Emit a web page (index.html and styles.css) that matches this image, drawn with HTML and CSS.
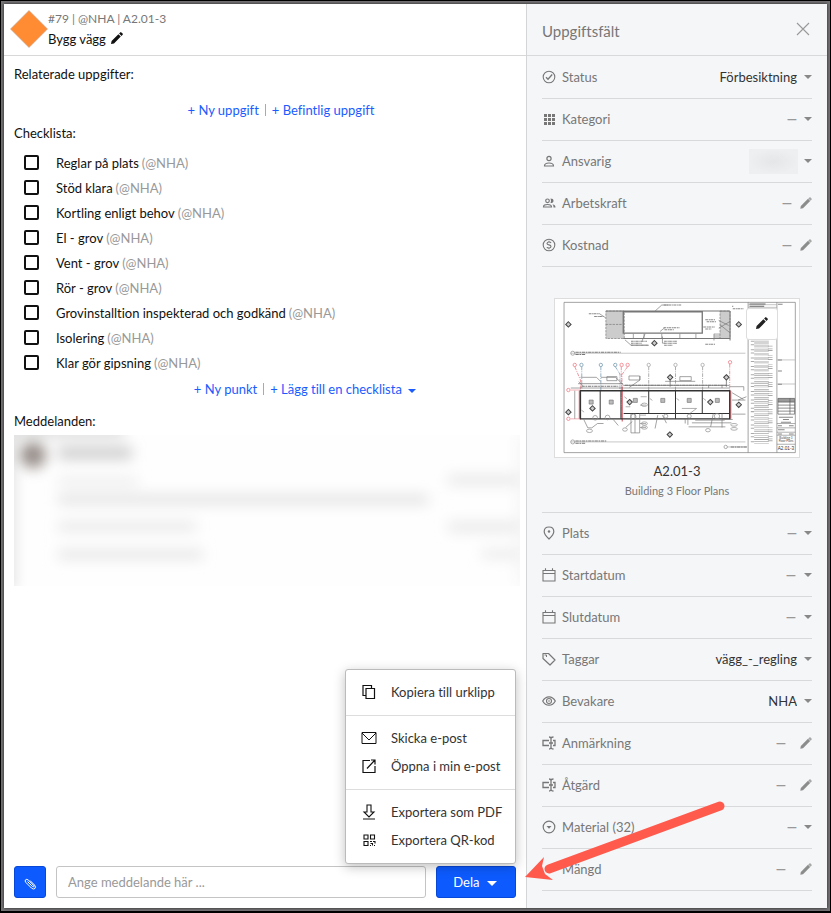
FILE: index.html
```html
<!DOCTYPE html>
<html lang="sv">
<head>
    <meta charset="utf-8">
    <title>Bygg vägg</title>
    <link rel="stylesheet" href="styles.css">
</head>
<body>
    <!-- Shared icons -->
    <svg class="sprite" aria-hidden="true">
        <symbol id="caret" viewBox="0 0 8 4"><path d="M0 0h8L4 4z" fill="currentColor"/></symbol>
        <symbol id="pencil" viewBox="0 0 12 12"><path d="M0 12l.6-3L7.400 2.200l2.400 2.400L3 11.400zM8.100 1.500L9.200.4q.6-.6 1.200 0l1.200 1.200q.6.600 0 1.200l-1.100 1.100z" fill="currentColor"/></symbol>
        <symbol id="edit" viewBox="0 0 12 12"><path d="M.3 11.700l.5-2.700L8 1.800l2.200 2.200L3 11.200z" fill="currentColor"/><path d="M8.300 1.500l1-1q.7-.5 1.300 0l.9.900q.5.600 0 1.300l-1 1z" fill="currentColor" opacity=".75"/></symbol>
        <symbol id="calendar" viewBox="0 0 14 14"><path d="M1 2.500h12v10.500H1zM1 5.500h12M3.500 .3v2M10.500 .3v2" fill="none" stroke="currentColor" stroke-width="1.100"/></symbol>
        <symbol id="textfield" viewBox="0 0 14 14"><path d="M7 4.500H1v5h6M11 4.500h2v5h-2M7 1q2 0 2 1.500v9Q9 13 7 13M11.500 1Q9 1 9 2.500M9 11.500Q9 13 11.500 13M7 7h4" fill="none" stroke="currentColor" stroke-width="1.300"/></symbol>
    </svg>

    <div class="modal">
        <main class="task">
            <header class="task-header">
                <svg class="stamp" viewBox="0 0 38 38"><path d="M19 .5L37.500 19 19 37.500 .5 19z" fill="#ff8b33" stroke="#b9a89a" stroke-width=".6"/></svg>
                <div>
                    <div class="task-meta">#79 | @NHA | A2.01-3</div>
                    <h1>Bygg vägg <button class="plain" aria-label="Redigera titel"><svg width="12" height="12"><use href="#pencil"/></svg></button></h1>
                </div>
            </header>

            <section class="task-body">
                <h2>Relaterade uppgifter:</h2>
                <div class="links related"><a href="#">+ Ny uppgift</a><i></i><a href="#">+ Befintlig uppgift</a></div>

                <h2>Checklista:</h2>
                <ul class="checklist">
                    <li><label><input type="checkbox"> Reglar på plats <span>(@NHA)</span></label></li>
                    <li><label><input type="checkbox"> Stöd klara <span>(@NHA)</span></label></li>
                    <li><label><input type="checkbox"> Kortling enligt behov <span>(@NHA)</span></label></li>
                    <li><label><input type="checkbox"> El - grov <span>(@NHA)</span></label></li>
                    <li><label><input type="checkbox"> Vent - grov <span>(@NHA)</span></label></li>
                    <li><label><input type="checkbox"> Rör - grov <span>(@NHA)</span></label></li>
                    <li><label><input type="checkbox"> Grovinstalltion inspekterad och godkänd <span>(@NHA)</span></label></li>
                    <li><label><input type="checkbox"> Isolering <span>(@NHA)</span></label></li>
                    <li><label><input type="checkbox"> Klar gör gipsning <span>(@NHA)</span></label></li>
                </ul>
                <div class="links list-links"><a href="#">+ Ny punkt</a><i></i><a href="#">+ Lägg till en checklista <svg width="8" height="4"><use href="#caret"/></svg></a></div>

                <h2 class="messages-title">Meddelanden:</h2>
                <!-- Messages are blurred for privacy -->
                <svg class="messages" viewBox="0 0 506 151" preserveAspectRatio="none" aria-hidden="true">
                    <defs><filter id="soft" x="-20%" y="-60%" width="140%" height="220%"><feGaussianBlur stdDeviation="7"/></filter></defs>
                    <rect width="506" height="151" fill="#fefefe"/>
                    <g filter="url(#soft)">
                        <path d="M-10-10h120v12H-10zM-10 0H0v155h-10z" fill="#d9d9d9"/>
                        <circle cx="19" cy="20" r="13" fill="#948b86"/>
                        <rect x="44" y="12" width="74" height="12" fill="#cbcbcb"/>
                        <rect x="44" y="42" width="80" height="9" fill="#ededed"/>
                        <rect x="44" y="60" width="370" height="9" fill="#e0e0e0"/>
                        <rect x="44" y="87" width="138" height="9" fill="#e6e6e6"/>
                        <rect x="44" y="115" width="145" height="9" fill="#e4e4e4"/>
                        <rect x="434" y="40" width="70" height="10" fill="#e8e8e8"/>
                        <rect x="434" y="87" width="70" height="10" fill="#e8e8e8"/>
                        <rect x="468" y="114" width="36" height="10" fill="#ececec"/>
                        <rect x="504" y="0" width="8" height="151" fill="#f2f2f2"/>
                    </g>
                </svg>
            </section>

            <footer class="composer">
                <button class="primary attach" aria-label="Bifoga fil">
                    <svg width="14" height="14" viewBox="0 0 14 14"><path d="M4.500 4.500l5 5q.8.700 1.300.2t-.2-1.300L5.200 3Q3.700 1.700 2.600 2.800t.2 2.600l5.600 5.600q2 1.900 3.500.5t-.4-3.500L7 3.500" fill="none" stroke="#fff"/></svg>
                </button>
                <input type="text" aria-label="Meddelande" placeholder="Ange meddelande här ...">
                <div class="share">
                    <button class="primary">Dela <svg width="10" height="5"><use href="#caret"/></svg></button>
                    <div class="menu">
                        <div class="menu-group">
                            <button><svg viewBox="0 0 16 16"><path d="M5 4.500h8.500v10H5zM10.500 4V1.500H2v10h2.500" fill="none" stroke="currentColor" stroke-width="1.200"/></svg>Kopiera till urklipp</button>
                        </div>
                        <div class="menu-group">
                            <button><svg viewBox="0 0 16 16"><path d="M1 2.500h14v11H1zM1 3l7 7 7-7" fill="none" stroke="currentColor"/></svg>Skicka e-post</button>
                            <button><svg viewBox="0 0 16 16"><path d="M9 2.500H2v12h12V8M6 10.500l7.500-8M10 2h4v4.500" fill="none" stroke="currentColor" stroke-width="1.200"/></svg>Öppna i min e-post</button>
                        </div>
                        <div class="menu-group">
                            <button><svg viewBox="0 0 16 16"><path d="M6 1h4v7h3l-5 5-5-5h3zM2 15h12" fill="none" stroke="currentColor" stroke-width="1.100"/></svg>Exportera som PDF</button>
                            <button><svg viewBox="0 0 16 16"><path d="M3 3h4v4H3zM9.500 3h4v4h-4zM3 9.500h4v4H3zM9 9.500h2M9.500 11.500h2v2M12 9.500h2v2M9 13.500h1M13 13.500h1" fill="none" stroke="currentColor" stroke-width="1.100"/></svg>Exportera QR-kod</button>
                        </div>
                    </div>
                </div>
            </footer>
        </main>

        <aside class="fields">
            <header class="fields-header">
                <h2>Uppgiftsfält</h2>
                <button class="plain close" aria-label="Stäng"><svg width="14" height="14" viewBox="0 0 14 14"><path d="M1 1l12 12M13 1L1 13" fill="none" stroke="#999" stroke-width="1.100"/></svg></button>
            </header>

            <div class="field-list">
                <div class="field">
                    <svg class="icon" viewBox="0 0 14 14"><circle cx="7" cy="7" r="5.800" fill="none" stroke="currentColor" stroke-width="1.100"/><path d="M4 7.300l2 2 4.200-4.800" fill="none" stroke="currentColor" stroke-width="1.300"/></svg>
                    <label for="status">Status</label>
                    <select id="status"><option>Förbesiktning</option></select>
                    <svg class="caret"><use href="#caret"/></svg>
                </div>
                <div class="field">
                    <svg class="icon" viewBox="0 0 14 14"><path d="M2 2h3v3H2zM6 2h3v3H6zM10 2h3v3h-3zM2 6h3v3H2zM6 6h3v3H6zM10 6h3v3h-3zM2 10h3v3H2zM6 10h3v3H6zM10 10h3v3h-3z" fill="currentColor"/></svg>
                    <label for="category">Kategori</label>
                    <select id="category" class="empty"><option>—</option></select>
                    <svg class="caret"><use href="#caret"/></svg>
                </div>
                <div class="field">
                    <svg class="icon" viewBox="0 0 14 14"><circle cx="7" cy="4.500" r="2.100" fill="none" stroke="currentColor" stroke-width="1.200"/><path d="M2.500 12q0-3 4.500-3t4.500 3z" fill="none" stroke="currentColor" stroke-width="1.200"/></svg>
                    <span class="name">Ansvarig</span>
                    <button class="plain value" aria-label="Välj ansvarig"><span class="redacted"></span><svg class="caret"><use href="#caret"/></svg></button>
                </div>
                <div class="field">
                    <svg class="icon" viewBox="0 0 14 14"><circle cx="5.500" cy="4.800" r="1.800" fill="none" stroke="currentColor" stroke-width="1.200"/><path d="M1.500 11q0-2.500 4-2.500t4 2.500z" fill="none" stroke="currentColor" stroke-width="1.200"/><path d="M8.500 2.500q3 0 3 2.300t-3 2.300q1-2.300 0-4.600zM10.500 8.300q3 .5 3 3.300h-2q.2-2-1-3.300z" fill="currentColor"/></svg>
                    <span class="name">Arbetskraft</span>
                    <button class="plain value" aria-label="Redigera arbetskraft">—<svg class="edit"><use href="#edit"/></svg></button>
                </div>
                <div class="field">
                    <svg class="icon" viewBox="0 0 14 14"><circle cx="7" cy="7" r="5.800" fill="none" stroke="currentColor" stroke-width="1.100"/><path d="M9 5Q8.700 4 7 4T5 5.400Q5 6.500 7 6.900t2 1.600Q9 10 7 10T5 9M7 2.700V4M7 10v1.300" fill="none" stroke="currentColor" stroke-width="1.100"/></svg>
                    <span class="name">Kostnad</span>
                    <button class="plain value" aria-label="Redigera kostnad">—<svg class="edit"><use href="#edit"/></svg></button>
                </div>

                <figure class="plan">
                    <div class="sheet">
                        <svg viewBox="31 28 729 471" aria-label="Planritning A2.01-3">
                            <g fill="none" stroke="#999" stroke-width="2">
                                <path d="M58 38h691v449H58zM608 38v449M694 38v449" stroke="#777"/>
                                <path d="M608 45h86M608 53h86M694 210h55M694 282h55M78 190h522M78 455h522M545 470h60" stroke="#aaa"/>
                                <path d="M694 400h55M694 413h55M694 426h55M694 435h55M694 462h55" stroke="#888"/>
                            </g>
                            <!-- Upper plan -->
                            <path d="M183 64h55v82h-55zM524 64h30v82h-30zM506 130h18v16h-18z" fill="#ccc"/>
                            <g fill="none" stroke="#777" stroke-width="2">
                                <path d="M183 64h55v82h-55zM524 64h30v82h-30zM183 104h50" stroke-dasharray="7 3"/>
                                <path d="M235 66h236v64H235z" stroke="#777" stroke-width="4"/>
                                <path d="M183 64h371M235 146h319M554 64v88" stroke="#777" stroke-width="3"/>
                                <path d="M265 132v14M297 132v14M350 132v14M404 132v14M452 132v14M240 150l18 16h50M300 132l-10 24M345 125l15-12M352 140v20l8 0M330 64l20-18h20M164 72l18 12M506 132v20M520 92l30 15M520 115l34-20M524 105l30 24"/>
                            </g>
                            <path d="M356 46h52M132 72h32M148 80h28M355 114h48M358 120h28M258 154h48M258 160h32M258 166h54M357 154h40M357 160h38M357 166h26M480 90h30M484 96h28M474 112h34M480 118h18M480 163h30M562 48v4M562 57h32" fill="none" stroke="#888" stroke-width="3" stroke-dasharray="8 2 4 1"/>
                            <!-- Grid lines and markers -->
                            <g fill="none" stroke="#888" stroke-width="2" stroke-dasharray="11 3 3 3">
                                <path d="M311 230v72M391 230v158M472 230v72"/>
                                <path d="M111 230v65M168 230v72M211 230l14 22v45" stroke="#628ba5"/>
                                <path d="M90 230l17 40v118M229 230v160M248 230l-17 24v135M553 222v165" stroke="#df6672"/>
                            </g>
                            <g fill="#fff" stroke-width="2">
                                <g stroke="#999"><circle cx="311" cy="225" r="5"/><circle cx="391" cy="225" r="5"/><circle cx="472" cy="225" r="5"/></g>
                                <g stroke="#628ba5"><circle cx="110" cy="225" r="5"/><circle cx="168" cy="225" r="5"/><circle cx="211" cy="225" r="5"/></g>
                                <g stroke="#ef6672"><circle cx="90" cy="225" r="5"/><circle cx="230" cy="225" r="5"/><circle cx="248" cy="225" r="5"/><circle cx="554" cy="217" r="5"/><circle cx="71" cy="300" r="5"/><circle cx="71" cy="386" r="5"/></g>
                            </g>
                            <!-- Lower plan -->
                            <path d="M78 300h30M78 386h30" stroke="#ef8890" stroke-width="2" fill="none"/>
                            <path d="M104 302v84M232 290v104M556 302v84" fill="none" stroke="#dd7981" stroke-width="4"/>
                            <g fill="none" stroke="#333" stroke-width="4">
                                <path d="M107 302h446v84H107z"/>
                                <path d="M166 302v84M228 302v84M311 302v68M391 302v84M471 302v68M236 370h317" stroke-width="3"/>
                                <path d="M100 281h134M236 286h315" stroke="#666" stroke-width="2"/>
                                <path d="M90 302v84M78 294h475M102 275l12 12M225 275l12 12M107 262h48l12 12M168 262h44l12 12M252 258h32v12h-32zM186 260h30v12h-30zM404 260h34v12h-34zM285 258v12l-32 22M360 274h90M490 294v-8M530 294v-8M553 290h42v12M560 308l34 20M560 330h40M560 372h40M578 330l25-10M117 388l12 25h12l17-13h18M205 388l15 18M258 370v58M270 370v58M258 428h26v-58M242 412l20-18M338 375l-8 40M352 375l12 24M420 386v14M428 386v18M430 410h110M440 398h118M450 390h88M504 370l-8 40M562 388h-32M530 370v42" stroke="#777" stroke-width="2"/>
                                <path d="M110 360l8 6M238 320l8 6M314 325l8 6M394 325l8 6M474 325l8 6M287 320h18M285 345h18M285 375h18M285 400h18M285 412h18M410 355h44l-20 15M242 350h14" stroke="#888" stroke-width="2"/>
                            </g>
                            <g fill="none" stroke="#888" stroke-width="2">
                                <ellipse cx="134" cy="422" rx="9" ry="5"/><ellipse cx="240" cy="418" rx="7" ry="5"/><ellipse cx="488" cy="420" rx="7" ry="5"/><ellipse cx="298" cy="344" rx="9" ry="5"/><ellipse cx="298" cy="400" rx="9" ry="5"/><ellipse cx="298" cy="412" rx="9" ry="5"/><ellipse cx="566" cy="404" rx="10" ry="4"/><ellipse cx="566" cy="416" rx="10" ry="4"/><circle cx="151" cy="383" r="7"/><circle cx="188" cy="382" r="7"/><circle cx="265" cy="380" r="8"/><circle cx="362" cy="378" r="6"/><circle cx="432" cy="378" r="6"/><circle cx="515" cy="378" r="8"/><circle cx="84" cy="190" r="6"/><circle cx="84" cy="455" r="6"/><circle cx="541" cy="470" r="5"/>
                            </g>
                            <path d="M133 330h12v12h-12zM193 330h12v12h-12zM265 325h12v12h-12zM347 325h12v12h-12zM426 325h12v12h-12zM510 325h12v12h-12z" fill="#bbb" stroke="#777" stroke-width="2"/>
                            <path d="M71 96l8 8-8 8-8-8zM580 96l8 8-8 8-8-8zM328 152l8 8-8 8-8-8zM375 254l8 8-8 8-8-8zM543 254l8 8-8 8-8-8zM143 347l8 8-8 8-8-8zM254 328l8 8-8 8-8-8zM495 328l8 8-8 8-8-8zM580 336l8 8-8 8-8-8zM71 358l8 8-8 8-8-8zM374 425l8 8-8 8-8-8z" fill="#ccc" stroke="#444" stroke-width="3"/>
                            <path d="M375 270v20M543 270v20" stroke="#555" stroke-width="2"/>
                            <path d="M92 187h135M92 194h30M92 452h92M92 459h30M556 470h50M240 286h305M110 289h110" stroke="#777" stroke-width="3" stroke-dasharray="10 2 5 2" fill="none"/>
                            <!-- Notes column -->
                            <path d="M612 43h48M612 50h44" stroke="#666" stroke-width="3"/>
                            <g stroke="#aaa" stroke-width="3" fill="none">
                                <path d="M621 153v307" stroke-width="10" stroke-dasharray="3 7 3 12"/>
                                <path d="M648 153v307" stroke-width="44" stroke-dasharray="2 3 3 4 2 3 2 5"/>
                                <path d="M674 168v289" stroke-width="14" stroke-dasharray="2 5 2 3 3 12"/>
                            </g>
                            <path d="M697 325h50v11h-50z" fill="#999"/>
                            <path d="M697 325h50v47h-50zM697 336h50M697 345h50M697 354h50M697 363h50M733 325v47" fill="none" stroke="#555" stroke-width="2"/>
                            <path d="M700 381h42M712 388h18M706 396h30M697 407h12M697 419h20M697 431h12M730 407h14M730 431h14M697 44h14M697 210h12M697 243h12M697 283h12" stroke="#888" stroke-width="3"/>
                            <text x="721" y="447" class="sheet-text">Building 3</text>
                            <text x="721" y="456" class="sheet-text">Floor Plans</text>
                            <text x="721" y="479" class="sheet-number">A2.01-3</text>
                        </svg>
                        <button class="sheet-edit" aria-label="Redigera ritning"><svg width="12" height="12"><use href="#pencil"/></svg></button>
                    </div>
                    <figcaption>A2.01-3<small>Building 3 Floor Plans</small></figcaption>
                </figure>

                <div class="field">
                    <svg class="icon" viewBox="0 0 14 14"><path d="M7 13Q2.200 8.700 2.200 5.600 2.200 1 7 1t4.800 4.600Q11.800 8.700 7 13z" fill="none" stroke="currentColor" stroke-width="1.200"/><circle cx="7" cy="5.500" r="1.200" fill="currentColor"/></svg>
                    <label for="place">Plats</label>
                    <select id="place" class="empty"><option>—</option></select>
                    <svg class="caret"><use href="#caret"/></svg>
                </div>
                <div class="field">
                    <svg class="icon"><use href="#calendar"/></svg>
                    <span class="name">Startdatum</span>
                    <button class="plain value" aria-label="Välj startdatum">—<svg class="caret"><use href="#caret"/></svg></button>
                </div>
                <div class="field">
                    <svg class="icon"><use href="#calendar"/></svg>
                    <span class="name">Slutdatum</span>
                    <button class="plain value" aria-label="Välj slutdatum">—<svg class="caret"><use href="#caret"/></svg></button>
                </div>
                <div class="field">
                    <svg class="icon" viewBox="0 0 14 14"><path d="M1 1.500h5.500l6.500 6.500-5 5L1 6.500z" fill="none" stroke="currentColor" stroke-width="1.200" stroke-linejoin="round"/><path d="M2.500 3h2v2" fill="none" stroke="currentColor"/></svg>
                    <label for="tags">Taggar</label>
                    <select id="tags"><option>vägg_-_regling</option></select>
                    <svg class="caret"><use href="#caret"/></svg>
                </div>
                <div class="field">
                    <svg class="icon" viewBox="0 0 14 14"><path d="M.7 7Q3 2.800 7 2.800T13.300 7Q11 11.200 7 11.200T.7 7z" fill="none" stroke="currentColor" stroke-width="1.200"/><circle cx="7" cy="7" r="2.500" fill="none" stroke="currentColor" stroke-width="1.100"/><circle cx="7" cy="7" r=".8" fill="currentColor"/></svg>
                    <label for="watchers">Bevakare</label>
                    <select id="watchers"><option>NHA</option></select>
                    <svg class="caret"><use href="#caret"/></svg>
                </div>
                <div class="field note">
                    <svg class="icon"><use href="#textfield"/></svg>
                    <span class="name">Anmärkning</span>
                    <button class="plain value" aria-label="Redigera anmärkning">—<svg class="edit"><use href="#edit"/></svg></button>
                </div>
                <div class="field note">
                    <svg class="icon"><use href="#textfield"/></svg>
                    <span class="name">Åtgärd</span>
                    <button class="plain value" aria-label="Redigera åtgärd">—<svg class="edit"><use href="#edit"/></svg></button>
                </div>
                <div class="field">
                    <svg class="icon" viewBox="0 0 14 14"><circle cx="7" cy="7" r="5.800" fill="none" stroke="currentColor" stroke-width="1.200"/><path d="M4.500 6h5L7 8.700z" fill="currentColor"/></svg>
                    <label for="material">Material (32)</label>
                    <select id="material" class="empty"><option>—</option></select>
                    <svg class="caret"><use href="#caret"/></svg>
                </div>
                <div class="field note">
                    <svg class="icon" viewBox="0 0 14 14"><path d="M3 7h8M7 3v8" stroke="currentColor" stroke-width="1.200"/></svg>
                    <span class="name">Mängd</span>
                    <button class="plain value" aria-label="Redigera mängd">—<svg class="edit"><use href="#edit"/></svg></button>
                </div>
            </div>
        </aside>

        <svg class="pointer" viewBox="0 0 202 82" aria-hidden="true">
            <path d="M196 7L25 70" stroke="#ff5a4c" stroke-width="9" stroke-linecap="round"/>
            <path d="M1 78L20 58l-2 9 3 8 8 6z" fill="#ff5a4c"/>
        </svg>
    </div>
</body>
</html>
```
FILE: styles.css
```css
* {
    box-sizing: border-box;
}

body {
    margin: 0;
    min-height: 100vh;
    display: flex;
    padding: 3px;
    border: 1px solid #000;
    border-bottom-width: 2px;
    background: #757375;
    font: 13px/20px Lato, sans-serif;
    font-variant-ligatures: none;
    color: #111;
}

h1, h2, ul, figure {
    margin: 0;
    padding: 0;
    font-size: 13px;
    font-weight: 400;
}

button, input, select {
    font: inherit;
    font-variant-ligatures: none;
    color: inherit;
}

button {
    cursor: pointer;
}

a {
    color: #1a5cff;
    text-decoration: none;
}

.sprite {
    position: absolute;
    width: 0;
    height: 0;
}

.plain {
    padding: 0;
    border: none;
    background: none;
}

.modal {
    position: relative;
    display: flex;
    flex: 1;
    background: #fff;
    box-shadow: 0 0 3px #222;
}

/* Task */
.task {
    flex: 1;
    min-width: 0;
    display: flex;
    flex-direction: column;
}

.task-header {
    display: flex;
    align-items: center;
    height: 52px;
    padding: 0 0 2px 6px;
    border-bottom: 1px solid #d8d8d8;
}

.stamp {
    width: 38px;
    height: 38px;
}

.task-meta {
    font-size: 12px;
    color: #777;
}

.task-header .plain {
    margin-left: 2px;
}

.task-body {
    flex: 1;
    padding: 8px 6px 0 10px;
}

.links {
    display: flex;
    justify-content: center;
    align-items: center;
    gap: 6px;
}

.links i {
    width: 1px;
    height: 12px;
    background: #aaa;
}

.links a svg {
    margin-left: 3px;
    vertical-align: middle;
}

.related {
    margin: 16px 0 3px;
    padding-left: 28px;
}

.list-links {
    padding-left: 76px;
}

.checklist {
    list-style: none;
    margin: 7px 0 4px 10px;
}

.checklist label {
    display: flex;
    align-items: center;
    gap: 3px;
    height: 25px;
}

.checklist span {
    color: #999;
}

.checklist input {
    appearance: none;
    width: 15px;
    height: 15px;
    margin: 0 14px 0 0;
    border: 2px solid #111;
    border-radius: 2px;
    background: #fff;
}

.checklist input:checked {
    background: #111;
}

.messages-title {
    margin-top: 12px;
}

.messages {
    display: block;
    width: 100%;
    height: 151px;
    margin-top: 4px;
}

/* Composer */
.composer {
    display: flex;
    gap: 10px;
    padding: 0 10px 10px;
}

.composer input {
    flex: 1;
    min-width: 0;
    height: 32px;
    padding: 0 11px;
    border: 1px solid #c4c4c4;
    border-radius: 3px;
}

.composer input::placeholder {
    color: #999;
}

.primary {
    height: 32px;
    padding: 0;
    border: 1px solid #0748d8;
    border-radius: 3px;
    background: #0d5bff;
    color: #fff;
}

.primary svg {
    vertical-align: middle;
}

.attach {
    width: 32px;
}

.share {
    position: relative;
}

.share .primary {
    width: 80px;
}

.share .primary svg {
    margin: 0 2px 0 4px;
}

.menu {
    position: absolute;
    right: 0;
    bottom: 100%;
    width: 171px;
    margin-bottom: 2px;
    border: 1px solid #bbb;
    border-radius: 3px;
    background: #fff;
    box-shadow: 0 3px 12px rgba(0, 0, 0, 0.25);
    color: #333;
}

.menu-group {
    padding: 8px 0 9px;
}

.menu-group + .menu-group {
    border-top: 1px solid #ddd;
}

.menu button {
    display: flex;
    align-items: center;
    gap: 14px;
    width: 100%;
    height: 28px;
    padding: 0 0 0 15px;
    border: none;
    background: none;
    white-space: nowrap;
}

.menu svg {
    width: 16px;
    height: 16px;
    color: #111;
}

/* Fields */
.fields {
    width: 301px;
    border-left: 1px solid #d4d5d7;
    background: #f5f6f8;
    color: #777;
}

.fields-header {
    display: flex;
    justify-content: space-between;
    align-items: center;
    height: 52px;
    padding: 2px 17px 0 15px;
    border-bottom: 1px solid #d8d9db;
}

.fields-header h2 {
    font-size: 15px;
}

.close {
    height: 24px;
}

.field-list {
    padding: 1px 15px 0;
}

.field {
    display: flex;
    align-items: center;
    height: 42px;
    padding-bottom: 1px;
    border-bottom: 1px solid #d8d9db;
}

.icon {
    width: 14px;
    height: 14px;
    margin-right: 6px;
}

.field select {
    appearance: none;
    flex: 1;
    min-width: 0;
    padding: 0 15px 0 0;
    margin-right: -8px;
    border: none;
    background: none;
    color: #333;
    text-align-last: right;
}

.field .empty {
    font-weight: 700;
    color: #999;
}

.value {
    display: flex;
    align-items: center;
    gap: 8px;
    margin-left: auto;
    font-weight: 700;
    color: #999;
}

.note .value {
    gap: 14px;
}

.caret {
    width: 8px;
    height: 4px;
    color: #888;
    pointer-events: none;
}

.edit {
    width: 12px;
    height: 12px;
    color: #8c8c8c;
}

.redacted {
    width: 49px;
    height: 25px;
    margin-right: -2px;
    background: radial-gradient(closest-side, #e5e6e8, #eeeff1);
}

/* Drawing */
.plan {
    padding: 31px 12px 11px;
    border-bottom: 1px solid #d8d9db;
    text-align: center;
}

.sheet {
    position: relative;
    border: 1px solid #ddd;
    background: #fff;
}

.sheet > svg {
    display: block;
    width: 100%;
}

.sheet-text {
    font-size: 9px;
    text-anchor: middle;
    fill: #444;
}

.sheet-number {
    font: 14px "Liberation Sans", sans-serif;
    text-anchor: middle;
    fill: #333;
}

.sheet-edit {
    position: absolute;
    top: 9px;
    right: 21px;
    width: 32px;
    height: 32px;
    padding: 0;
    border: 1px solid #ddd;
    border-radius: 3px;
    background: #fff;
    color: #222;
}

.plan figcaption {
    margin-top: 3px;
    color: #333;
}

.plan small {
    display: block;
    font-size: 11px;
    color: #777;
}

/* Arrow towards the share button */
.pointer {
    position: absolute;
    right: 101px;
    bottom: 27px;
    width: 202px;
    height: 82px;
    pointer-events: none;
}
```
